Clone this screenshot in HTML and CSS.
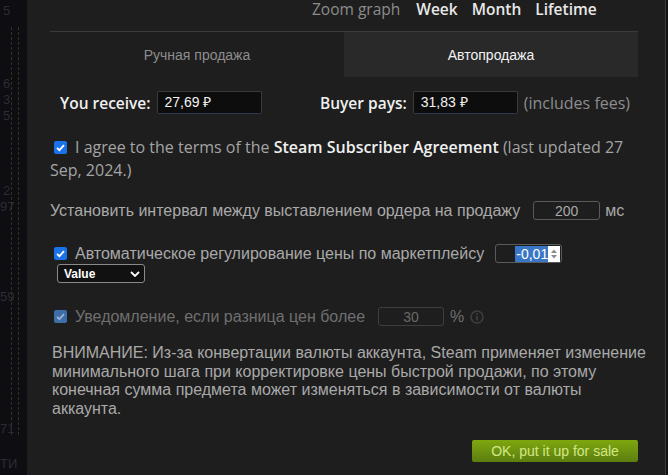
FILE: index.html
```html
<!DOCTYPE html>
<html lang="ru">
<head>
<meta charset="utf-8">
<link rel="stylesheet" href="styles.css">
</head>
<body>
<div class="page">
  <div class="backdrop">
    <div class="bd-col bd-col1"></div>
    <div class="bd-col bd-col2"></div>
    <span class="bd-num n1">5</span>
    <span class="bd-num n2">6</span>
    <span class="bd-num n3">3</span>
    <span class="bd-num n4">5</span>
    <span class="bd-num n5">2</span>
    <span class="bd-num n6">97</span>
    <span class="bd-num n7">59</span>
    <span class="bd-num n8">71</span>
    <span class="bd-num n9">ТИ</span>
  </div>
  <div class="modal">
    <div class="zoom-row">
      <span class="zoom-label">Zoom graph</span>
      <span class="zoom-link">Week</span>
      <span class="zoom-link">Month</span>
      <span class="zoom-link">Lifetime</span>
    </div>
    <div class="tabs">
      <div class="tab">Ручная продажа</div>
      <div class="tab active">Автопродажа</div>
    </div>
    <div class="price-row">
      <div class="price-group first">
        <span class="price-label">You receive:</span>
        <span class="price-input">27,69 ₽</span>
      </div>
      <div class="price-group">
        <span class="price-label">Buyer pays:</span>
        <span class="price-input">31,83 ₽</span>
        <span class="fees">(includes fees)</span>
      </div>
    </div>
    <div class="agree">
      <span class="check"><svg viewBox="0 0 13 13" width="13" height="13"><rect x="0" y="0" width="13" height="13" rx="2" fill="#1a73e8"/><path d="M3 6.8 L5.4 9.1 L10 4.2" fill="none" stroke="#fff" stroke-width="1.8"/></svg></span>I agree to the terms of the <b class="ssa">Steam Subscriber Agreement</b> (last updated 27 Sep, 2024.)
    </div>
    <div class="ru-row interval">
      <span>Установить интервал между выставлением ордера на продажу</span>
      <span class="num-box">200</span>
      <span>мс</span>
    </div>
    <div class="ru-row auto">
      <span class="check"><svg viewBox="0 0 13 13" width="13" height="13"><rect x="0" y="0" width="13" height="13" rx="2" fill="#1a73e8"/><path d="M3 6.8 L5.4 9.1 L10 4.2" fill="none" stroke="#fff" stroke-width="1.8"/></svg></span>
      <span>Автоматическое регулирование цены по маркетплейсу</span>
      <span class="num-box spin"><span class="sel">-0,01</span><span class="spinner"><svg viewBox="0 0 12 16" width="12" height="16"><rect width="12" height="16" fill="#fff"/><path d="M3 7 L6 3.5 L9 7 Z M3 9 L6 12.5 L9 9 Z" fill="#8a8a8a"/></svg></span></span>
    </div>
    <div class="select-row">
      <span class="select">Value<svg viewBox="0 0 10 6" width="10" height="6"><path d="M1 1 L5 5 L9 1" fill="none" stroke="#fff" stroke-width="1.8"/></svg></span>
    </div>
    <div class="ru-row notify">
      <span class="check"><svg viewBox="0 0 13 13" width="13" height="13"><rect x="0" y="0" width="13" height="13" rx="2" fill="#3d6ea8"/><path d="M3 6.8 L5.4 9.1 L10 4.2" fill="none" stroke="#9ab3d0" stroke-width="1.8"/></svg></span>
      <span>Уведомление, если разница цен более</span>
      <span class="num-box dimbox">30</span>
      <span>%</span>
      <span class="info"><svg viewBox="0 0 14 14" width="14" height="14"><circle cx="7" cy="7" r="6" fill="none" stroke="#3e3e3e" stroke-width="1.6"/><rect x="6.1" y="6" width="1.8" height="4.5" fill="#3e3e3e"/><rect x="6.1" y="3.4" width="1.8" height="1.7" fill="#3e3e3e"/></svg></span>
    </div>
    <p class="warning">ВНИМАНИЕ: Из-за конвертации валюты аккаунта, Steam применяет изменение минимального шага при корректировке цены быстрой продажи, по этому конечная сумма предмета может изменяться в зависимости от валюты аккаунта.</p>
    <div class="actions">
      <span class="btn">OK, put it up for sale</span>
    </div>
  </div>
  <div class="edge"></div>
</div>
</body>
</html>
```

FILE: styles.css
```css
html, body {
  margin: 0;
  padding: 0;
  background: #0b0b0f;
  width: 668px;
  height: 475px;
  overflow: hidden;
}
.page {
  display: flex;
  width: 668px;
  height: 475px;
}
.backdrop {
  position: relative;
  width: 27px;
  flex: none;
  background: #0d0d12;
  overflow: hidden;
  font-family: "Liberation Sans", Arial, sans-serif;
  font-size: 13px;
  color: #2c2c34;
}
.bd-col {
  position: absolute;
  top: 27px;
  bottom: 40px;
  border-left: 1px dashed #33331a;
}
.bd-col1 { left: 11px; }
.bd-col2 { left: 18px; }
.bd-num { position: absolute; left: 3px; }
.n1 { top: 3px; }
.n2 { top: 76px; }
.n3 { top: 92px; }
.n4 { top: 108px; }
.n5 { top: 183px; }
.n6 { top: 199px; left: 0; }
.n7 { top: 289px; left: 0; }
.n8 { top: 421px; left: 0; }
.n9 { top: 456px; left: 0; }
.modal {
  width: 638px;
  flex: none;
  background: #1e1e1e;
  padding: 0 27px 0 23px;
  box-sizing: border-box;
  color: #a9a9a9;
  font-family: "Liberation Sans", Arial, sans-serif;
}
.edge {
  width: 3px;
  flex: none;
  background: #111;
  border-left: 1px solid #3a3a3a;
  box-sizing: border-box;
}
.zoom-row {
  height: 31px;
  box-sizing: border-box;
  padding: 0 0 0 262px;
  font-family: "Open Sans", sans-serif;
  font-size: 15.5px;
  line-height: 18px;
  display: flex;
  gap: 14px;
}
.zoom-label { color: #8d8d8d; margin-right: 2px; }
.zoom-link { color: #e8e8e8; font-weight: 600; }
.tabs {
  display: flex;
  border-top: 1px solid #3b3b3b;
  height: 45px;
}
.tab {
  flex: 1;
  display: flex;
  align-items: center;
  justify-content: center;
  font-size: 14px;
  color: #8d8d8d;
}
.tab.active {
  background: #292929;
  color: #f2f2f2;
}
.price-row {
  display: flex;
  padding: 14px 0 0 10px;
  height: 23px;
}
.price-group {
  display: flex;
  align-items: center;
  gap: 6px;
  white-space: nowrap;
}
.price-group.first { width: 260px; }
.price-label {
  font-family: "Open Sans", sans-serif;
  font-weight: 600;
  font-size: 15.5px;
  color: #f0f0f0;
}
.price-input {
  width: 105px;
  height: 23px;
  box-sizing: border-box;
  background: #0d0d0d;
  border: 1px solid #3a3a3a;
  border-bottom-color: #2b3a4c;
  border-radius: 2px;
  padding: 3px 7px;
  font-size: 14px;
  color: #f2f2f2;
  line-height: 15px;
}
.fees {
  font-family: "Open Sans", sans-serif;
  font-size: 16px;
  color: #8d8d8d;
}
.agree {
  margin-top: 22px;
  font-family: "Open Sans", sans-serif;
  font-size: 16px;
  line-height: 23px;
  color: #a4a4a4;
}
.agree .check { margin: 0 8px 0 4px; }
.ssa { color: #f0f0f0; font-weight: 600; }
.check { display: inline-flex; vertical-align: -1px; }
.ru-row {
  display: flex;
  align-items: center;
  font-size: 16px;
  color: #a9a9a9;
  white-space: nowrap;
}
.interval { margin-top: 17px; height: 23px; }
.interval .num-box { margin: 0 5px 0 13px; }
.auto { margin-top: 20px; height: 23px; }
.auto .check { margin: 0 8px 0 4px; }
.auto .num-box { margin-left: 11px; }
.num-box {
  width: 67px;
  height: 19px;
  box-sizing: border-box;
  border: 1px solid #5a5a5a;
  border-radius: 3px;
  display: flex;
  align-items: center;
  justify-content: center;
  font-size: 14px;
  color: #a9a9a9;
}
.num-box.spin {
  justify-content: flex-end;
  padding-right: 1px;
}
.sel {
  background: #3a76c6;
  color: #fff;
  font-size: 14px;
  line-height: 16px;
  padding: 0 0 0 1px;
}
.spinner { display: flex; }
.select-row { padding-left: 7px; margin-top: -1px; }
.select {
  width: 88px;
  height: 19px;
  box-sizing: border-box;
  border: 1px solid #8a8a8a;
  border-radius: 3px;
  display: flex;
  align-items: center;
  justify-content: space-between;
  padding: 0 4px 0 6px;
  font-size: 12px;
  font-weight: 700;
  color: #fff;
  background: #111;
}
.notify { margin-top: 22px; height: 23px; color: #6f6f6f; }
.notify .check { margin: 0 8px 0 4px; }
.dimbox { width: 66px; margin: 0 6px 0 13px; border-color: #3e3e3e; color: #6a6a6a; }
.info { display: flex; margin-left: 6px; }
.warning {
  margin: 16px -13px 0 2px;
  font-size: 16px;
  line-height: 18.5px;
  color: #a9a9a9;
}
.actions {
  display: flex;
  justify-content: flex-end;
  margin-top: 22px;
}
.btn {
  width: 166px;
  height: 22px;
  border-radius: 2px;
  background: linear-gradient(to bottom, #7ea70f 0%, #5c7e10 100%);
  color: #d2e885;
  font-size: 14px;
  display: flex;
  align-items: center;
  justify-content: center;
}
```
